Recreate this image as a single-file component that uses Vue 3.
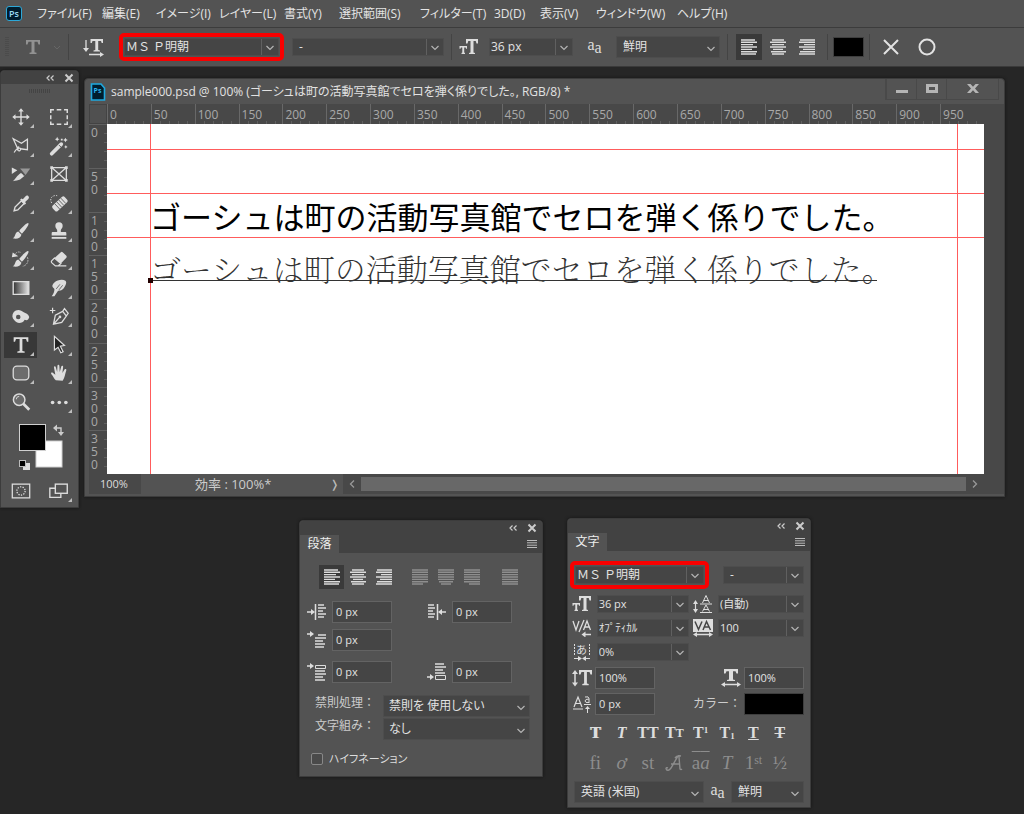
<script setup>
import { ref, h } from 'vue'

const menus = [
  { text: 'ファイル(F)', w: 55 }, { text: '編集(E)', w: 44 }, { text: 'イメージ(I)', w: 53 },
  { text: 'レイヤー(L)', w: 55 }, { text: '書式(Y)', w: 45 }, { text: '選択範囲(S)', w: 71 },
  { text: 'フィルター(T)', w: 64 }, { text: '3D(D)', w: 36 }, { text: '表示(V)', w: 46 },
  { text: 'ウィンドウ(W)', w: 71 }, { text: 'ヘルプ(H)', w: 52 }
]

const tools = [
  { name: '移動', svg: '<path d="M12 5v14M5 12h14" stroke="#ddd" stroke-width="1.5"/><path d="M12 2.5l3 3.5H9zM12 21.5l3-3.5H9zM2.5 12L6 9v6zM21.5 12L18 9v6z" fill="#ddd"/>' },
  { name: '長方形選択', svg: '<path d="M3 7.500V4h3.500M9.500 4h5M17.500 4H21v3.500M21 10v4.500M21 17v3h-3.500M14.500 20h-5M6.500 20H3v-3M3 14.500V10" fill="none" stroke="#ddd" stroke-width="1.600"/>' },
  { name: '多角形なげなわ', svg: '<path d="M9 16L3.500 4l9 5 6.500-4.500V16l-8-1" fill="none" stroke="#ddd" stroke-width="1.400"/><path d="M10 13c-2 0-3 2-1.500 3.500S12 17 11.500 15s-5 0-7 4" fill="none" stroke="#ddd" stroke-width="1.300"/>' },
  { name: '自動選択', svg: '<path d="M4 20.500L14.500 10" stroke="#ddd" stroke-width="4" stroke-linecap="round"/><path d="M12 11l3 3" stroke="#535353"/><path d="M10 2l.8 1.800 1.700.8-1.700.8L10 7l-.8-1.600-1.700-.8 1.700-.8zM19 3l.9 1.700 1.700.8-1.700.8L19 8l-.9-1.700-1.600-.8 1.600-.8zM19.500 11l.6 1.300 1.300.7-1.300.7-.6 1.300-.7-1.300-1.200-.7 1.200-.7zM14 4h2v2h-2z" fill="#ddd"/>' },
  { name: 'スライス', svg: '<path d="M2 5v7l6-4z" fill="#ddd"/><path d="M11 6h11l-5 7z" fill="#999"/><path d="M3 20c3-2 4-6 9-9l4 3-5 4c-2 1-5 1-8 2z" fill="#ddd"/><path d="M12.500 9l3 5" stroke="#535353"/>' },
  { name: 'フレーム', corner: false, svg: '<path d="M4 5h16v14H4zM4 5l16 14M20 5L4 19" fill="none" stroke="#ddd" stroke-width="1.400"/><path d="M2.500 3.500h3v3h-3zM18.500 3.500h3v3h-3zM2.500 17.500h3v3h-3zM18.500 17.500h3v3h-3z" fill="#ddd"/>' },
  { name: 'スポイト', svg: '<path d="M4.500 20.500l1-4 7-7 3 3-7 7z" fill="none" stroke="#ddd" stroke-width="1.500"/><path d="M11 8.500l1.500-1.500 1.500 1 3-3.500c2-2 5 1 3 3L16.500 11l1 1.500L16 14z" fill="#ddd"/>' },
  { name: '修復ブラシ', svg: '<g transform="rotate(-43 13 13)"><path d="M6 9h14q2 0 2 2v4q0 2-2 2H6q-2 0-2-2v-4q0-2 2-2z" fill="#ddd"/><path d="M9 9v8M12 9v8M15 9v8M18 9v8" stroke="#666"/></g><path d="M4 12C1 7 5 3 10 4" fill="none" stroke="#ddd" stroke-dasharray="1.500 1.500"/>' },
  { name: 'ブラシ', svg: '<path d="M20 3.500c1.500 1-4 8.500-7 11.500l-3-3c3-4 9-9.500 10-8.500z" fill="#ddd"/><path d="M9 12.500l3.500 3.500c-1 4-5 5-9.500 4 3-1 2-6.500 6-7.500z" fill="#ddd"/>' },
  { name: 'コピースタンプ', svg: '<path d="M10 11c0-1-2-2-2-4.500a4 4 0 018 0C16 9 14 10 14 11v2h5q1 0 1 1.500V17H4v-2.500Q4 13 5 13h5z" fill="#ddd"/><path d="M4 19.500h16" stroke="#ddd" stroke-width="2"/>' },
  { name: 'ヒストリーブラシ', svg: '<path d="M20 3.500c1.500 1-4 8.500-7 11.500l-3-3c3-4 9-9.500 10-8.500z" fill="#ddd"/><path d="M9 12.500l3.500 3.500c-1 4-5 5-9.500 4 3-1 2-6.500 6-7.500z" fill="#ddd"/><path d="M2 10l1-5 6 4z" fill="#ddd"/><path d="M6 6c2-2 4-2 6-1M19 10c2 5-1 9-5 10" fill="none" stroke="#bbb" stroke-dasharray="2 1"/>' },
  { name: '消しゴム', svg: '<path d="M4 14L14 4.500q1-.8 2 0l4 4q.8 1 0 2l-6 6.500-7-6.500" fill="#ddd"/><path d="M7 11l7 6-3 2.500H8L4 16q-.8-1 0-2zM10 19.500h10" fill="#535353" stroke="#ddd" stroke-width="1.400"/>' },
  { name: 'グラデーション', svg: '<defs><linearGradient id="toolGrad"><stop stop-color="#333"/><stop offset="1" stop-color="#e6e6e6"/></linearGradient></defs><path d="M3.500 5h17v14h-17z" fill="url(#toolGrad)" stroke="#ddd" stroke-width="1.500"/>' },
  { name: '指先', svg: '<path d="M4 21c2-3 3-5 3-8l-2-2c-1-2 1-4 2-5 3-3 9-4 12-2 2 2 0 5-1 7-2 4-5 4-7 4l-4 6z" fill="#ddd"/><path d="M9 13l4-5M12 14l4-5" stroke="#666"/>' },
  { name: '焼き込み', svg: '<path d="M4 8c3-4 8-3 11 0 2 1 5 2 6 5-1 4-3 4-5 3-2 4-8 5-11 1-3-3-3-6-1-9z" fill="#ddd"/><circle cx="9" cy="13" r="2.500" fill="#535353"/>' },
  { name: 'ペン', svg: '<path d="M6 21l2-10 8-4 4 5-5 7zM6 21l6-7M16 7l2-3 4 5-2 3" fill="none" stroke="#ddd" stroke-width="1.400"/><circle cx="13" cy="13" r="1.500" fill="#ddd"/><path d="M5 3v6M2 6h6" stroke="#ddd" stroke-width="1.300"/>' },
  { name: '文字', active: true, svg: '<path d="M4 3.500h16V8.500H18.500l-1-3h-4v13l2.500.6v1.400H8v-1.400l2.500-.6v-13h-4l-1 3H4z" fill="#ddd"/>' },
  { name: 'パス選択', svg: '<path d="M7 2.500v15l4-3 3 6 2.500-1.200-3-6 4.500-.8z" fill="#222" stroke="#ddd" stroke-width="1.300"/>' },
  { name: '角丸長方形', svg: '<rect x="3.500" y="4.500" width="17" height="15" rx="4" fill="#6c6c6c" stroke="#ddd" stroke-width="1.400"/>' },
  { name: '手のひら', svg: '<path d="M8.500 20c-2-2-3-5-5-7-.7-1.500 1-2 2-1l2.500 2L6.500 6c0-1.500 1.700-1.700 2-.3L10 11l.3-7c.1-1.500 2-1.500 2.100 0l.4 7 1.700-6c.5-1.300 2.200-1 2 .5L15.700 12l2.500-4c.8-1 2.200-.3 1.800 1-1.500 4-1.500 8-4 11.500z" fill="#ddd"/>' },
  { name: 'ズーム', corner: false, svg: '<circle cx="10" cy="9.500" r="6.300" fill="#6b6b6b" stroke="#ddd" stroke-width="1.600"/><path d="M14.500 14l6.500 6.500" stroke="#ddd" stroke-width="3"/><path d="M7 9c0-2 1-3 3-3" fill="none" stroke="#ddd"/>' },
  { name: 'その他', svg: '<circle cx="5" cy="12.500" r="2" fill="#ddd"/><circle cx="12.300" cy="12.500" r="2" fill="#ddd"/><circle cx="19.500" cy="12.500" r="2" fill="#ddd"/>' }
]

const ys = [1, 3.3, 5.6, 8, 10.4, 12.7, 15]
function lines(spans) {
  return spans.map(([a, b], i) => `M${a} ${ys[i]}H${b}`).join('')
}
const align = {
  left: lines([[0, 14], [0, 16], [0, 12], [0, 16], [0, 11], [0, 16], [0, 15]]),
  center: lines([[2, 14], [0, 16], [2, 14], [0, 16], [3, 13], [1, 16], [2, 14]]),
  right: lines([[1, 16], [0, 16], [5, 16], [0, 16], [4, 16], [1, 16], [0, 16]]),
  jl: lines([[0, 16], [0, 16], [0, 16], [0, 16], [0, 16], [0, 16], [0, 11]]),
  jc: lines([[0, 16], [0, 16], [0, 16], [0, 16], [0, 16], [1, 15], [3, 13]]),
  jr: lines([[0, 16], [0, 16], [0, 16], [0, 16], [0, 16], [0, 16], [5, 16]]),
  jf: lines([[0, 16], [0, 16], [0, 16], [0, 16], [0, 16], [0, 16], [0, 16]])
}
const aligns = [['left', '左揃え'], ['center', '中央揃え'], ['right', '右揃え']]
const justifies = [['jl', '均等配置(最終行左揃え)'], ['jc', '均等配置(最終行中央揃え)'], ['jr', '均等配置(最終行右揃え)'], ['jf', '両端揃え']]

const indents = [
  { label: '左インデント', value: '0 px', svg: '<path d="M0 9h6M8.500 1v16" stroke="#ddd" stroke-width="1.500"/><path d="M4 6l4 3-4 3z" fill="#ddd"/><path d="M11 2h6M11 5h8M11 8h5M11 11h8M11 14h6" stroke="#ddd" stroke-width="1.500"/>' },
  { label: '右インデント', value: '0 px', svg: '<path d="M13 9h6M10.500 1v16" stroke="#ddd" stroke-width="1.500"/><path d="M15 6l-4 3 4 3z" fill="#ddd"/><path d="M1 2h6M1 5h7M1 8h5M1 11h7M1 14h6" stroke="#ddd" stroke-width="1.500"/>' },
  { label: '1行目インデント', value: '0 px', svg: '<path d="M0 3h4" stroke="#ddd" stroke-width="1.500"/><path d="M3 0l4 3-4 3z" fill="#ddd"/><path d="M11 4h8M8 7h11M8 10h8M8 13h10M8 16h9" stroke="#ddd" stroke-width="1.500"/>' },
  null,
  { label: '段落前の間隔', value: '0 px', svg: '<path d="M0 3h4" stroke="#ddd" stroke-width="1.500"/><path d="M3 0l4 3-4 3z" fill="#ddd"/><path d="M8.500 2.500h10v3h-10z" fill="none" stroke="#ddd"/><path d="M8 8h10M8 11h11M8 14h8M8 17h10" stroke="#ddd" stroke-width="1.500"/>' },
  { label: '段落後の間隔', value: '0 px', svg: '<path d="M0 14h4" stroke="#ddd" stroke-width="1.500"/><path d="M3 11l4 3-4 3z" fill="#ddd"/><path d="M8.500 12.500h10v4h-10z" fill="none" stroke="#ddd"/><path d="M8 1h9M8 4h11M8 7h8M8 10h10" stroke="#ddd" stroke-width="1.500"/>' }
]

const hTicks = Array.from({ length: 20 }, (_, i) => i * 50)
const vTicks = Array.from({ length: 8 }, (_, i) => i * 50)
const hyphen = ref(false)

function Combo(props) {
  return h('span', { class: ['combo', { split: props.split }] }, [
    h('select', { 'aria-label': props.label, value: props.value }, [h('option', { value: props.value }, props.value)]),
    h('svg', { viewBox: '0 0 16 16', class: 'chev', 'aria-hidden': 'true' }, [
      h('path', { d: 'M4.500 7l3.500 3.500L11.500 7', fill: 'none', stroke: '#b4b4b4', 'stroke-width': 1.2 })
    ])
  ])
}
Combo.props = { label: String, value: String, split: Boolean }
</script>

<template>
  <div class="app">
    <nav class="menubar" aria-label="メニュー">
      <span class="logo">Ps</span>
      <button v-for="m in menus" :key="m.text" type="button" :style="{ width: m.w + 'px' }">{{ m.text }}</button>
    </nav>

    <header class="options">
      <svg class="grip" viewBox="0 0 4 20"><path d="M1 0v20M3 0v20" stroke="#454545" stroke-dasharray="1 1" /></svg>
      <button type="button" class="tool-t" aria-label="文字ツール">
        <svg width="42" height="20" viewBox="0 0 42 20"><path d="M2 3h14v4.500h-1.500l-1-2.700h-3v10.400l2 .6V17H5.500v-1.200l2-.6V4.800h-3l-1 2.700H2z" fill="#929292" /><path d="M30 9l3 3 3-3" fill="none" stroke="#666" /></svg>
      </button>
      <i class="sep"></i>
      <button type="button" class="orient" aria-label="テキストの方向">
        <svg width="22" height="20" viewBox="0 0 22 20"><path d="M7.500 2H20v4h-1.300l-.7-2h-2.800v9l1.800.4v1H10.500v-1l1.800-.4V4H9.500l-.7 2H7.500z" fill="#ddd" /><path d="M3 3v10M6 17.500h12" stroke="#ddd" stroke-width="1.300" /><path d="M0 11h6l-3 4zM17 15l4 2.500-4 2.500z" fill="#ddd" /></svg>
      </button>
      <span class="red"><Combo label="フォント" value="ＭＳ Ｐ明朝" split /></span>
      <Combo class="w-style" label="スタイル" value="-" split />
      <i class="sep"></i>
      <svg class="ico-size" width="20" height="18" viewBox="0 0 20 18"><path d="M7 1h12v4.500h-1.500l-.8-2.500H14.500v11.500l1.500.5v1h-6v-1l1.500-.5V3H9.300l-.8 2.500H7z" fill="#ddd" /><path d="M.5 8h7.500v2.700h-1L6.700 9.500H5.200v5l.8.500v1H2.500v-1l.8-.5v-5H1.900L1.500 10.700h-1z" fill="#ddd" /></svg>
      <Combo class="w-size" label="フォントサイズ" value="36 px" split />
      <span class="aa">a<sub>a</sub></span>
      <Combo class="w-aa" label="アンチエイリアス" value="鮮明" />
      <i class="sep"></i>
      <div class="aligns">
        <button v-for="(a, i) in aligns" :key="a[0]" type="button" :aria-label="a[1]" :class="{ on: i === 0 }">
          <svg viewBox="0 0 16 16"><path :d="align[a[0]]" /></svg>
        </button>
      </div>
      <i class="sep"></i>
      <button type="button" class="swatch" aria-label="テキストカラー"></button>
      <i class="sep"></i>
      <button type="button" class="act" aria-label="キャンセル"><svg viewBox="0 0 18 18"><path d="M2 2l14 14M16 2L2 16" /></svg></button>
      <button type="button" class="act" aria-label="確定"><svg viewBox="0 0 18 18"><circle cx="9" cy="9" r="7.500" /></svg></button>
    </header>

    <main class="desk">
      <aside class="win tools" aria-label="ツール">
        <div class="bar">
          <button type="button" aria-label="折りたたむ"><svg viewBox="0 0 12 12"><path d="M5.500 3.500L3 6l2.500 2.500M9.500 3.500L7 6l2.500 2.500" /></svg></button>
          <button type="button" aria-label="閉じる"><svg viewBox="0 0 12 12"><path d="M2.500 2.500l7 7M9.500 2.500l-7 7" class="x" /></svg></button>
        </div>
        <div class="dots"></div>
        <div class="toolgrid">
          <button v-for="t in tools" :key="t.name" type="button" :aria-label="t.name" :class="{ on: t.active }">
            <svg viewBox="0 0 24 24" v-html="t.svg"></svg>
            <i v-if="t.corner !== false" class="corner"></i>
          </button>
        </div>
        <div class="colors">
          <svg viewBox="0 0 46 47" role="img" aria-label="描画色と背景色">
            <rect x="17" y="17" width="26" height="26" fill="#fff" stroke="#d0d0d0" />
            <rect x=".5" y=".5" width="26" height="26" fill="#000" stroke="#d0d0d0" />
            <path d="M38 4h4v5" fill="none" stroke="#ccc" stroke-width="1.400" />
            <path d="M34 4l4-3.500v7zM42 12l-3-4h6z" fill="#ccc" />
            <rect x="4" y="39" width="7" height="7" fill="#ddd" />
            <rect x=".5" y="36.500" width="6" height="6" fill="#000" stroke="#bbb" />
          </svg>
        </div>
        <div class="modes">
          <button type="button" aria-label="クイックマスク"><svg viewBox="0 0 24 24"><rect x="2.500" y="4.500" width="19" height="15" fill="none" stroke="#ddd" stroke-width="1.400" /><circle cx="12" cy="12" r="4.500" fill="none" stroke="#ddd" stroke-width="1.400" stroke-dasharray="1.400 1.400" /></svg></button>
          <button type="button" aria-label="スクリーンモード"><svg viewBox="0 0 24 24"><path d="M8 9H2v10h12v-4" fill="none" stroke="#ddd" stroke-width="1.500" /><rect x="8" y="4.500" width="13" height="10" fill="none" stroke="#ddd" stroke-width="1.500" /></svg><i class="corner"></i></button>
        </div>
      </aside>

      <section class="win doc" aria-label="sample000.psd">
        <div class="title">
          <svg width="16" height="18" viewBox="0 0 16 18"><path d="M1.500 1H11l3.500 4v12h-13z" fill="#001d2e" stroke="#1fa9e0" stroke-width="1.600" /><text x="3.500" y="10" font-size="7" font-weight="bold" fill="#2bb5ee">Ps</text></svg>
          <span>sample000.psd @ 100% (ゴーシュは町の活動写真館でセロを弾く係りでした。, RGB/8) *</span>
          <div class="winbtns">
            <button type="button" aria-label="最小化"><svg viewBox="0 0 14 14"><path d="M1 8h12v3H1z" /></svg></button>
            <button type="button" aria-label="最大化"><svg viewBox="0 0 14 14"><path d="M1 2h12v9H1zM4 5v3h6V5z" fill-rule="evenodd" /></svg></button>
            <button type="button" aria-label="閉じる"><svg viewBox="0 0 14 14"><path d="M1 2h3.500L7 4.800 9.500 2H13L9 6.500l4 4.500H9.500L7 8.200 4.500 11H1l4-4.500z" /></svg></button>
          </div>
        </div>
        <div class="view">
          <div class="origin"></div>
          <div class="hr"><span v-for="n in hTicks" :key="n">{{ n }}</span></div>
          <div class="vr"><span v-for="n in vTicks" :key="n"><b v-for="(d, i) in String(n)" :key="i">{{ d }}</b></span></div>
          <div class="canvas">
            <p class="line gothic">ゴーシュは町の活動写真館でセロを弾く係りでした。</p>
            <p class="line mincho"><span>ゴーシュは町の活動写真館でセロを弾く係りでした。</span></p>
            <i class="gh g1"></i><i class="gh g2"></i><i class="gh g3"></i>
            <i class="gv v1"></i><i class="gv v2"></i>
          </div>
        </div>
        <div class="status">
          <span class="zoom">100%</span>
          <span class="eff">効率 : 100%*</span>
          <button type="button" class="more" aria-label="情報">❭</button>
          <button type="button" aria-label="左へ"><svg viewBox="0 0 12 12"><path d="M8 2.500L4.500 6 8 9.500" /></svg></button>
          <div class="track"></div>
          <button type="button" aria-label="右へ"><svg viewBox="0 0 12 12"><path d="M4 2.500L7.500 6 4 9.500" /></svg></button>
        </div>
      </section>

      <section class="win para" aria-label="段落">
        <div class="bar">
          <button type="button" aria-label="折りたたむ"><svg viewBox="0 0 12 12"><path d="M5.500 3.500L3 6l2.500 2.500M9.500 3.500L7 6l2.500 2.500" /></svg></button>
          <button type="button" aria-label="閉じる"><svg viewBox="0 0 12 12"><path d="M2.500 2.500l7 7M9.500 2.500l-7 7" class="x" /></svg></button>
        </div>
        <div class="tabs"><button type="button" class="tab">段落</button><button type="button" class="menu" aria-label="メニュー"><svg viewBox="0 0 10 8"><path d="M0 .5h10M0 2.800h10M0 5.200h10M0 7.500h10" /></svg></button></div>
        <div class="body">
          <div class="alignrow">
            <div class="aligns">
              <button v-for="(a, i) in aligns" :key="a[0]" type="button" :aria-label="a[1]" :class="{ on: i === 0 }"><svg viewBox="0 0 16 16"><path :d="align[a[0]]" /></svg></button>
            </div>
            <div class="aligns dim">
              <button v-for="a in justifies" :key="a[0]" type="button" disabled :aria-label="a[1]"><svg viewBox="0 0 16 16"><path :d="align[a[0]]" /></svg></button>
            </div>
          </div>
          <div class="indents">
            <template v-for="(f, i) in indents" :key="i">
              <label v-if="f"><svg viewBox="0 0 20 18" v-html="f.svg"></svg><input type="text" :value="f.value" :aria-label="f.label" /></label>
              <span v-else></span>
            </template>
          </div>
          <div class="sets">
            <span>禁則処理：</span><Combo label="禁則処理" value="禁則を 使用しない" />
            <span>文字組み：</span><Combo label="文字組み" value="なし" />
          </div>
          <label class="check"><input v-model="hyphen" type="checkbox" /><span>ハイフネーション</span></label>
        </div>
      </section>

      <section class="win char" aria-label="文字">
        <div class="bar">
          <button type="button" aria-label="折りたたむ"><svg viewBox="0 0 12 12"><path d="M5.500 3.500L3 6l2.500 2.500M9.500 3.500L7 6l2.500 2.500" /></svg></button>
          <button type="button" aria-label="閉じる"><svg viewBox="0 0 12 12"><path d="M2.500 2.500l7 7M9.500 2.500l-7 7" class="x" /></svg></button>
        </div>
        <div class="tabs"><button type="button" class="tab">文字</button><button type="button" class="menu" aria-label="メニュー"><svg viewBox="0 0 10 8"><path d="M0 .5h10M0 2.800h10M0 5.200h10M0 7.500h10" /></svg></button></div>
        <div class="body">
          <div class="fontrow"><span class="red"><Combo label="フォント" value="ＭＳ Ｐ明朝" split /></span><Combo class="w-sub" label="スタイル" value="-" split /></div>
          <div class="metrics">
            <svg viewBox="0 0 20 18"><path d="M7 1h12v4.500h-1.500l-.8-2.500H14.500v11.500l1.500.5v1h-6v-1l1.500-.5V3H9.300l-.8 2.500H7z" fill="#ddd" /><path d="M.5 8h7.500v2.700h-1L6.700 9.500H5.200v5l.8.500v1H2.500v-1l.8-.5v-5H1.900L1.500 10.700h-1z" fill="#ddd" /></svg>
            <Combo label="フォントサイズ" value="36 px" split />
            <svg viewBox="0 0 20 18"><path d="M2.500 7v9M7 9h12M7 17.500h12" stroke="#ddd" stroke-width="1.200" /><path d="M0 9l2.500-4L5 9zM0 14h5l-2.500 4z" fill="#ddd" /><path d="M9.500 8L13 .5 16.500 8M10.500 5.500h5M9.500 16.500L13 10l3.500 6.500M10.500 14.500h5" fill="none" stroke="#ddd" /></svg>
            <Combo label="行送り" value="(自動)" split />

            <svg viewBox="0 0 20 18"><path d="M1 2l3 9 3-9M12 1L7 13M11.500 11l3.500-9 3.500 9M12.500 8h5" fill="none" stroke="#ddd" stroke-width="1.300" /><path d="M13 15.500h6" stroke="#ddd" stroke-width="1.500" /><path d="M9.500 15.500l4-3v6z" fill="#ddd" /></svg>
            <Combo label="カーニング" value="ｵﾌﾟﾃｨｶﾙ" split />
            <svg viewBox="0 0 20 18"><path d="M0 0h20v13H0z" fill="#ddd" /><path d="M2 2.500l3.500 8 3.500-8M10 11l3.500-8.500L17.500 11M11.500 8h5" fill="none" stroke="#444" stroke-width="1.500" /><path d="M3 15.500h14" stroke="#ddd" stroke-width="1.500" /><path d="M0 15.500L4 13v5zM20 15.500L16 13v5z" fill="#ddd" /></svg>
            <Combo label="トラッキング" value="100" split />

            <svg viewBox="0 0 20 18"><text x="4" y="11" font-size="11" fill="#ddd">あ</text><path d="M2.500 1v11M17.500 1v11" stroke="#ddd" stroke-dasharray="2 1" /><path d="M2 15.500h6M12 15.500h6" stroke="#ddd" /><path d="M6 13l4 2.500L6 18zM14 13l-4 2.500 4 2.500z" fill="#ddd" /></svg>
            <Combo label="ツメ" value="0%" split />
          </div>
          <div class="scales">
            <svg viewBox="0 0 20 18"><path d="M7 1h13v4.500h-1.500l-1-2.500h-2.600v11.500l1.800.5v1.200h-6.400V15l1.800-.5V3H9.500l-1 2.500H7z" fill="#ddd" /><path d="M3 4v11" stroke="#ddd" stroke-width="1.500" /><path d="M0 5l3-4 3 4zM0 13.500h6l-3 4z" fill="#ddd" /></svg>
            <input type="text" value="100%" aria-label="垂直比率" />
            <svg viewBox="0 0 20 18"><path d="M3 0h14v4.500h-1.500l-1-2.300H12v8.300l2 .5v1H6v-1l2-.5V2.200H5.500l-1 2.300H3z" fill="#ddd" /><path d="M3 15.500h14" stroke="#ddd" stroke-width="1.500" /><path d="M0 15.500L4 13v5zM20 15.500L16 13v5z" fill="#ddd" /></svg>
            <input type="text" value="100%" aria-label="水平比率" />
            <svg viewBox="0 0 20 18"><path d="M2 12L6 2l4 10M3.500 8.500h5M1 14h10" fill="none" stroke="#ddd" stroke-width="1.200" /><path d="M13 2q4-1 4 1.500V8m0-4q-4 0-4 2t4 1.500M12 9.500h7M15.500 12v6" fill="none" stroke="#ddd" /><path d="M13 14l2.500-3 2.500 3z" fill="#ddd" /></svg>
            <input type="text" value="0 px" aria-label="ベースラインシフト" />
            <span class="clabel">カラー：</span>
            <button type="button" class="swatch" aria-label="カラー"></button>
          </div>
          <div class="styles">
            <button type="button" class="faux">T</button><button type="button"><em>T</em></button><button type="button">TT</button><button type="button">T<small>T</small></button>
            <button type="button">T<sup>1</sup></button><button type="button">T<sub>1</sub></button><button type="button"><u>T</u></button><button type="button"><s>T</s></button>
          </div>
          <div class="styles ot">
            <button type="button">fi</button><button type="button"><em>ơ</em></button><button type="button">st</button>
            <button type="button" aria-label="スワッシュ字形"><svg width="18" height="18" viewBox="0 0 18 18"><path d="M1 15q2 3 5-1L13 2q1-1 1 1l1 12q1 1 2 0M6 10h9M10 4Q12 1 16 2M1 15q0-2 2-1" fill="none" stroke="#8d8d8d" stroke-width="1.400" /></svg></button>
            <button type="button" class="over">a<em>a</em></button><button type="button" class="titling"><em>T</em></button><button type="button">1<sup>st</sup></button><button type="button">½</button>
          </div>
          <div class="langrow"><Combo class="w-lang" label="言語" value="英語 (米国)" /><span class="aa">a<sub>a</sub></span><Combo class="w-aa2" label="アンチエイリアス" value="鮮明" /></div>
        </div>
      </section>
    </main>
  </div>
</template>

<style>
body { background: #262626; }
</style>

<style scoped>
.app { font: 12px/16px "Open Sans", "Noto Sans CJK JP", sans-serif; color: #ddd; min-height: 100vh; display: flex; flex-direction: column; }
.app *, .app :deep(*) { box-sizing: border-box; }
button { font: inherit; color: inherit; background: none; border: 0; padding: 0; margin: 0; display: flex; align-items: center; justify-content: center; }
svg { display: block; }
i { display: block; }

.menubar { display: flex; align-items: center; height: 28px; background: #535353; border-bottom: 1px solid #3c3c3c; padding-left: 6px; gap: 10px; font-size: 12px; }
.menubar button { font-feature-settings: "palt"; white-space: nowrap; flex: none; justify-content: flex-start; color: #e4e4e4; }
.logo { width: 16px; height: 15px; border: 1px solid #2da8d8; border-radius: 3px; background: #001d2e; color: #9bdcf5; font-size: 9px; line-height: 13px; font-weight: 600; text-align: center; margin-right: 5px; flex: none; }

.options { display: flex; align-items: center; height: 39px; background: #535353; border-bottom: 1px solid #3a3a3a; }
.grip { width: 4px; height: 20px; margin-left: 5px; }
.tool-t { margin: 0 2px 0 15px; }
.sep { width: 1px; height: 26px; background: #444; flex: none; }
.orient { width: 50px; }
.red { display: block; border: 4px solid #f80000; border-radius: 5px; background: #535353; padding: 1px; width: 165px; height: 28px; flex: none; }
.red .combo { width: 100%; }
:deep(.combo), .combo { display: flex; position: relative; height: 18px; background: #454545; border: 1px solid #4d4d4d; flex: none; }
:deep(.combo select) { appearance: none; background: none; border: 0; width: 100%; padding: 0 18px 0 1px; margin: 0; font: inherit; line-height: 16px; color: #e2e2e2; outline: none; }
:deep(.combo .chev) { position: absolute; right: 0; top: 0; width: 16px; height: 16px; pointer-events: none; }
:deep(.combo.split .chev) { border-left: 1px solid #606060; width: 17px; }
.w-style { width: 152px; margin: 0 7px 0 8px; }
.w-style :deep(select), .w-sub :deep(select) { padding-left: 6px; }
.ico-size { margin: 0 10px 0 7px; }
.w-size { width: 84px; }
.aa { font: 16px/16px "Liberation Serif", serif; width: 43px; text-align: center; padding-bottom: 5px; }
.aa sub { vertical-align: -3px; font-size: 16px; line-height: 0; }
.w-aa { width: 104px; height: 22px; margin-right: 7px; }
.w-aa :deep(select), .w-aa2 :deep(select), .w-lang :deep(select) { padding-left: 6px; }
.w-aa :deep(.chev), .w-aa2 :deep(.chev), .w-lang :deep(.chev), .sets :deep(.chev) { top: 3px; }
.aligns { display: flex; gap: 3px; }
.aligns button { width: 26px; height: 26px; }
.aligns .on { background: #3a3a3a; }
.aligns svg { width: 16px; height: 16px; }
.aligns path { stroke: #dcdcdc; stroke-width: 1.4; fill: none; }
.aligns.dim path { stroke: #8e8e8e; }
.options .aligns { margin: 0 7px 0 8px; }
.swatch { background: #000; border: 1px solid #3e3e3e; width: 31px; height: 20px; margin: 0 5px; }
.act { width: 18px; height: 18px; margin-left: 12px; }
.act + .act { margin-left: 18px; }
.act svg { width: 18px; height: 18px; fill: none; stroke: #e2e2e2; stroke-width: 2; }

.desk { position: relative; flex: 1; min-height: 746px; }
.win { position: absolute; background: #535353; border: 1px solid #3c3c3c; border-radius: 4px 4px 0 0; box-shadow: 0 0 3px #151515; }
.bar { display: flex; justify-content: flex-end; align-items: center; gap: 7px; height: 14px; background: #424242; padding-right: 4px; border-radius: 4px 4px 0 0; }
.bar svg { width: 12px; height: 12px; fill: none; stroke: #ccc; stroke-width: 1.2; }
.bar .x { stroke-width: 2; }

.tools { left: 0; top: 3px; width: 79px; height: 438px; }
.tools .bar { height: 13px; padding-right: 3px; }
.dots { width: 22px; height: 4px; margin: 5px auto 0; background: repeating-linear-gradient(90deg, #444 0 1px, #535353 1px 2px); }
.toolgrid { display: grid; grid-template-columns: 33px 33px; grid-template-rows: repeat(11, 1fr); column-gap: 5px; height: 313px; margin: 10px 0 0 3px; align-items: center; }
.toolgrid button, .modes button { position: relative; width: 33px; height: 26px; }
.toolgrid svg, .modes svg { width: 22px; height: 22px; }
.toolgrid .on { background: #383838; }
.corner { position: absolute; right: 3px; bottom: 2px; border-left: 4px solid transparent; border-bottom: 4px solid #bdbdbd; }
.colors { margin: 8px 0 0 18px; width: 46px; }
.modes { display: flex; gap: 5px; margin: 7px 0 0 3px; }

.doc { left: 84px; top: 11px; width: min(921px, calc(100% - 103px)); padding-bottom: 2px; }
.title { display: flex; align-items: center; height: 25px; padding-left: 5px; gap: 5px; }
.title > span { flex: 1; font-feature-settings: "palt"; white-space: nowrap; overflow: hidden; color: #e2e2e2; }
.winbtns { display: flex; align-self: flex-start; height: 21px; border: 1px solid #494949; border-top: 0; margin-right: 5px; }
.winbtns button { width: 30px; border-left: 1px solid #494949; }
.winbtns button:last-child { width: 52px; }
.winbtns svg { width: 14px; height: 14px; fill: #b5b5b5; }
.view { display: grid; grid-template: 20px 350px / 18px 1fr; margin-left: 4px; padding-right: 20px; background: #484848; }
.origin { background: #505050; border: 1px solid #434343; }
.hr { display: flex; }
.hr span { flex: 1; border-left: 1px solid #686868; padding: 3px 0 0 2px; color: #a8a8a8; background: repeating-linear-gradient(90deg, transparent 0 8px, #606060 8px 9px) bottom / 100% 3px no-repeat; min-width: 0; }
.vr { display: flex; flex-direction: column; color: #a8a8a8; }
.vr span { flex: 1; border-top: 1px solid #606060; padding: 1px 0 0 2px; min-height: 0; background: repeating-linear-gradient(180deg, transparent 0 8px, #606060 8px 9px) right / 3px 100% no-repeat; }
.vr span b { display: block; font-weight: 400; line-height: 13px; }
.canvas { position: relative; background: #fff; overflow: hidden; padding: 69px 0 0 43px; }
.line { margin: 0; height: 52px; line-height: 46px; font-family: "Noto Sans CJK JP", sans-serif; font-size: 31px; color: #000; white-space: nowrap; }
.mincho { font-family: "Noto Serif CJK JP", "Noto Sans CJK JP", serif; font-weight: 200; font-feature-settings: "halt"; color: #333; height: 36px; line-height: 46px; }
.mincho span { display: inline-block; height: 36px; border-bottom: 1px solid #333; }
.gh, .gv { position: absolute; background: #ff5c5c; }
.gh { left: 0; right: 0; height: 1px; }
.g1 { top: 25px; }
.g2 { top: 69px; }
.g3 { top: 113px; }
.gv { top: 0; bottom: 0; width: 1px; }
.v1 { left: 43px; }
.v2 { right: 26px; }
.v1::after { content: ""; position: absolute; left: -2px; top: 154px; width: 5px; height: 5px; background: #200; }
.status { display: flex; align-items: center; height: 20px; margin-left: 4px; padding-right: 20px; background: #484848; }
.zoom { width: 52px; padding-left: 11px; font-size: 11px; }
.eff { align-self: stretch; line-height: 20px; background: #535353; flex: none; width: 184px; padding-left: 54px; font-size: 13px; color: #ccc; }
.status button { width: 18px; height: 20px; color: #bbb; font-size: 11px; }
.status .more { background: #535353; }
.status svg { width: 12px; height: 12px; fill: none; stroke: #999; stroke-width: 1.3; }
.track { flex: 1; height: 14px; background: #686868; }

.tabs { display: flex; justify-content: space-between; height: 18px; background: #424242; }
.tab { background: #535353; width: 39px; height: 18px; font-size: 12px; color: #eee; }
.menu svg { width: 10px; height: 8px; stroke: #bbb; }
.menu { margin-right: 5px; }
input[type="text"] { width: 60px; height: 22px; background: #454545; border: 1px solid #636363; color: #e2e2e2; font: inherit; font-size: 11px; padding: 0 3px 1px; margin: 0; outline: none; }

.para { left: 299px; top: 453px; width: 244px; height: 257px; }
.para .body { padding: 12px 12px 0 7px; }
.alignrow { display: flex; gap: 11px; padding-left: 12px; }
.para .aligns { gap: 1px; }
.para .aligns button { width: 25px; height: 24px; }
.para .dim button:last-child { margin-left: 12px; }
.indents { display: grid; grid-template-columns: 120px 1fr; grid-template-rows: 28px 32px 22px; margin-top: 12px; align-items: start; }
.indents label { display: flex; align-items: center; gap: 5px; }
.indents label svg { width: 20px; height: 18px; }
.sets { display: grid; grid-template-columns: 68px 1fr; row-gap: 1px; margin: 12px 0 0 8px; color: #ccc; }
.sets :deep(.combo) { height: 22px; }
.sets :deep(select) { padding-left: 5px; font-feature-settings: "palt"; }
.check { display: flex; align-items: center; gap: 6px; margin: 11px 0 0 4px; }
.check span { font-size: 11px; font-feature-settings: "palt"; }
.check input { appearance: none; width: 12px; height: 12px; margin: 0; border: 1px solid #888; border-radius: 2px; background: #4a4a4a; }

.char { left: 567px; top: 451px; width: 244px; height: 290px; }
.char .body { padding: 10px 6px 0 2px; }
.fontrow { display: flex; align-items: center; justify-content: space-between; }
.fontrow .red { width: 139px; height: 28px; }
.w-sub { width: 81px; }
.metrics { display: grid; grid-template-columns: 20px 92px 20px 86px; justify-content: space-between; row-gap: 6px; margin: 6px 0 0 2px; }
.metrics svg, .scales svg { width: 20px; height: 18px; }
.metrics :deep(select) { font-size: 11px; }
.scales { display: grid; grid-template-columns: 20px 60px 1fr 60px; column-gap: 3px; row-gap: 4px; align-items: center; margin: 6px 0 0 2px; }
.scales svg:nth-of-type(2) { justify-self: end; }
.scales .swatch { width: 60px; height: 22px; margin: 0; }
.clabel { color: #ccc; text-align: right; }
.styles { display: grid; grid-template-columns: repeat(8, 1fr); padding: 0 11px 0 12px; height: 30px; margin-top: 3px; font: bold 16px/20px "Liberation Serif", serif; }
.styles small { font-size: 12px; }
.styles sup, .styles sub { font-size: 9px; line-height: 0; align-self: flex-start; margin-top: 12px; }
.styles sub { align-self: flex-end; margin: 0 0 12px; }
.faux { text-shadow: 1px 0 #ddd; }
.ot { color: #8d8d8d; font-weight: 400; font-size: 19px; margin-top: 0; }
.ot sup { font-size: 12px; }
.over { text-decoration: overline; font-size: 19px; }
.langrow { display: flex; align-items: center; margin: 3px 0 0 4px; }
.langrow :deep(.combo) { height: 22px; }
.w-lang { width: 130px; }
.w-aa2 { width: 73px; }
.langrow .aa { width: 28px; }
</style>
